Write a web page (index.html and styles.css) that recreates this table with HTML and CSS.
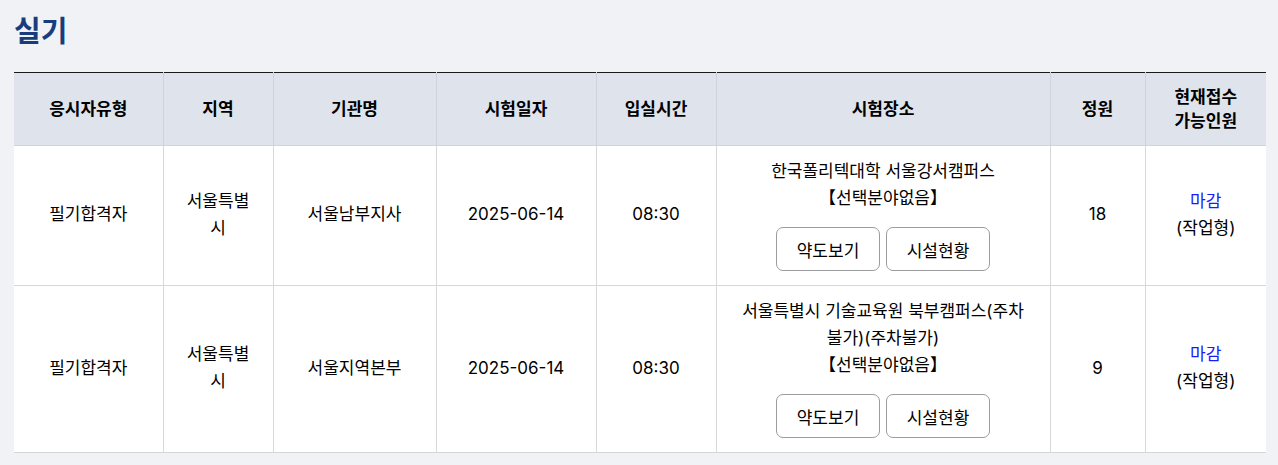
FILE: index.html
```html
<!DOCTYPE html>
<html lang="ko">
<head>
<meta charset="utf-8">
<title>실기</title>
<link rel="stylesheet" href="styles.css">
</head>
<body>
<div class="page">
  <h2 class="title">실기</h2>
  <table class="exam">
    <colgroup>
      <col class="c1"><col class="c2"><col class="c3"><col class="c4"><col class="c5"><col class="c6"><col class="c7"><col class="c8">
    </colgroup>
    <thead>
      <tr>
        <th>응시자유형</th>
        <th>지역</th>
        <th>기관명</th>
        <th>시험일자</th>
        <th>입실시간</th>
        <th>시험장소</th>
        <th>정원</th>
        <th>현재접수 가능인원</th>
      </tr>
    </thead>
    <tbody>
      <tr>
        <td>필기합격자</td>
        <td>서울특별시</td>
        <td>서울남부지사</td>
        <td>2025-06-14</td>
        <td>08:30</td>
        <td>
          <div class="place">한국폴리텍대학 서울강서캠퍼스<br>【선택분야없음】</div>
          <div class="btns"><button class="btn">약도보기</button><button class="btn">시설현황</button></div>
        </td>
        <td>18</td>
        <td><span class="closed">마감</span><br>(작업형)</td>
      </tr>
      <tr>
        <td>필기합격자</td>
        <td>서울특별시</td>
        <td>서울지역본부</td>
        <td>2025-06-14</td>
        <td>08:30</td>
        <td>
          <div class="place">서울특별시 기술교육원 북부캠퍼스(주차불가)(주차불가)<br>【선택분야없음】</div>
          <div class="btns"><button class="btn">약도보기</button><button class="btn">시설현황</button></div>
        </td>
        <td>9</td>
        <td><span class="closed">마감</span><br>(작업형)</td>
      </tr>
    </tbody>
  </table>
</div>
</body>
</html>
```
FILE: styles.css
```css
html, body {
  margin: 0;
  padding: 0;
  background: #f1f2f6;
}
body {
  font-family: Inter, "Noto Sans CJK KR", sans-serif;
  color: #000;
}
.page {
  padding: 12px 12px 12px 14px;
}
.title {
  margin: 0 0 20px 0;
  font-size: 29px;
  line-height: 40px;
  font-weight: 700;
  color: #173d7d;
}
.exam {
  width: 100%;
  border-collapse: collapse;
  table-layout: fixed;
  background: #fff;
  border-top: 1px solid #1a1a1a;
  border-bottom: 1px solid #d3d5d9;
  font-size: 17px;
}
.c1 { width: 149px; }
.c2 { width: 110px; }
.c3 { width: 163px; }
.c4 { width: 160px; }
.c5 { width: 120px; }
.c6 { width: 334px; }
.c7 { width: 95px; }
.c8 { width: 121px; }
.exam th {
  background: #dfe3ec;
  font-weight: 700;
  line-height: 24px;
  padding: 12px 22px;
  height: 48px;
  border-left: 1px solid #d0d3d9;
  border-bottom: 1px solid #d0d3d9;
}
.exam td {
  text-align: center;
  vertical-align: middle;
  line-height: 27px;
  padding: 12px 22px 14px;
  border-left: 1px solid #d8d8d8;
  border-top: 1px solid #d8d8d8;
}
.exam th:first-child, .exam td:first-child {
  border-left: none;
}
.btns {
  display: flex;
  justify-content: center;
  gap: 6px;
  margin-top: 15px;
}
.btn {
  font-family: inherit;
  font-size: 17px;
  color: #000;
  background: #fff;
  border: 1px solid #9c9c9c;
  border-radius: 7px;
  width: 104px;
  height: 44px;
  padding: 0;
}
.closed {
  color: #1a1aff;
}
```
